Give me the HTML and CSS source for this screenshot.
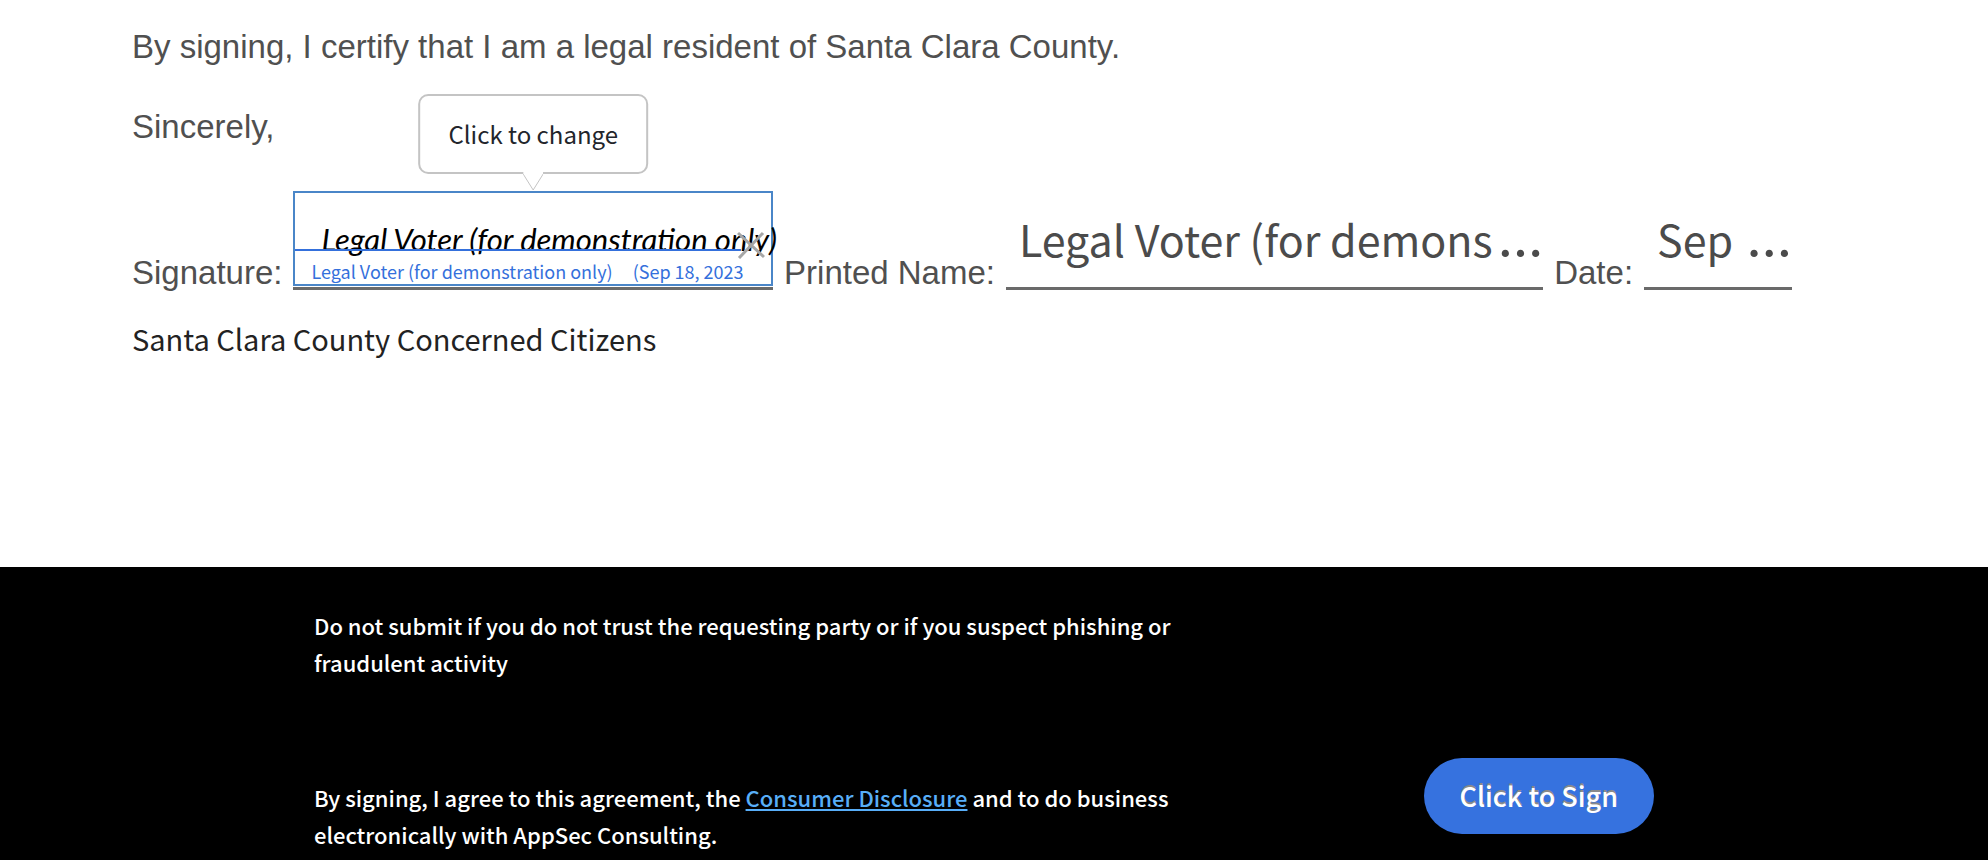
FILE: index.html
```html
<!DOCTYPE html>
<html lang="en">
<head>
<meta charset="utf-8">
<meta name="viewport" content="width=device-width, initial-scale=1">
<title>Sign agreement</title>
<link rel="stylesheet" href="styles.css">
</head>
<body>
<main class="document">
  <p class="line">By signing, I certify that I am a legal resident of Santa Clara County.</p>
  <p class="line">Sincerely,</p>
  <div class="sign-row">
    <label class="label" for="signature">Signature:</label>
    <div class="field field-signature">
      <div class="tooltip" role="tooltip" id="sig-tip">
        Click to change
        <svg class="arrow" viewBox="0 0 20 19" width="20" height="19" aria-hidden="true"><path d="M0 0 H20 V2 L10 18 L0 2 Z" fill="#fff"/><path d="M0 2 L10 18 L20 2" fill="none" stroke="#c4c4c4" stroke-width="1"/></svg>
      </div>
      <button class="signature" id="signature" type="button" aria-describedby="sig-tip">
        <span class="script">Legal Voter (for demonstration only)</span>
        <span class="stamp"><span>Legal Voter (for demonstration only)</span><span>(Sep 18, 2023</span></span>
      </button>
      <button class="clear" type="button" aria-label="Clear signature">
        <svg viewBox="0 0 28 28" width="28" height="28"><path d="M1 2 L27 26 M26 2 L2 27" fill="none" stroke="#a6a6a6" stroke-width="3"/></svg>
      </button>
    </div>
    <label class="label" for="printed">Printed Name:</label>
    <div class="field field-name">
      <input class="value" id="printed" type="text" value="Legal Voter (for demons" readonly>
      <span class="more">…</span>
    </div>
    <label class="label" for="date">Date:</label>
    <div class="field field-date">
      <input class="value" id="date" type="text" value="Sep" readonly>
      <span class="more">…</span>
    </div>
  </div>
  <p class="org">Santa Clara County Concerned Citizens</p>
</main>
<footer class="footer">
  <p class="notice">Do not submit if you do not trust the requesting party or if you suspect phishing or fraudulent activity</p>
  <div class="consent">
    <p class="notice">By signing, I agree to this agreement, the <a class="link" href="#">Consumer Disclosure</a> and to do business electronically with AppSec Consulting.</p>
    <button class="sign" type="button">Click to Sign</button>
  </div>
</footer>
</body>
</html>
```
FILE: styles.css
```css
* {
  box-sizing: border-box;
}

body {
  margin: 0;
  min-height: 100vh;
  display: flex;
  flex-direction: column;
  background: #fff;
  font-family: "Noto Sans CJK SC", "Noto Sans", sans-serif;
}

p {
  margin: 0;
}

button,
input {
  font: inherit;
  border: 0;
  background: none;
  padding: 0;
}

.document {
  flex: 1;
  padding: 27px 196px 0 132px;
}

.line,
.label {
  font-family: "Liberation Sans", Arial, sans-serif;
  font-size: 33px;
  line-height: 40px;
  color: #505050;
}

.line {
  margin-bottom: 40px;
}

.sign-row {
  display: flex;
  align-items: flex-end;
  gap: 11px;
  margin-top: 44px;
}

.label {
  line-height: 34px;
  white-space: nowrap;
}

.field {
  position: relative;
  display: flex;
  height: 99px;
  min-width: 0;
  border-bottom: 3px solid #6a6a6a;
}

.field-signature {
  flex: 483 1 0;
}

.field-name {
  flex: 541 1 0;
}

.field-date {
  flex: 149 1 0;
}

.signature {
  display: flex;
  flex-direction: column;
  width: 100%;
  height: 95px;
  border: 2px solid #4a86c8;
  text-align: left;
  white-space: nowrap;
}

.script {
  padding: 26px 0 0 26px;
  height: 56px;
  font-family: "Lato", sans-serif;
  font-style: italic;
  font-size: 31px;
  line-height: 40px;
  color: #000;
}

.stamp {
  position: relative;
  display: flex;
  gap: 20px;
  width: 446px;
  padding-left: 16px;
  border-top: 2px solid #3470dc;
  font-size: 18px;
  line-height: 40px;
  color: #3470dc;
}

.clear {
  position: absolute;
  right: 8px;
  top: 40px;
  width: 28px;
  height: 28px;
}

.clear svg {
  display: block;
}

.tooltip {
  position: absolute;
  left: 50%;
  bottom: 113px;
  transform: translateX(-50%);
  padding: 20px 28px;
  border: 2px solid #c4c4c4;
  border-radius: 10px;
  background: #fff;
  font-size: 24px;
  line-height: 36px;
  white-space: nowrap;
  color: #22252b;
}

.arrow {
  position: absolute;
  left: 50%;
  top: 100%;
  margin-left: -10px;
}

.value {
  flex: 1;
  min-width: 0;
  width: 100%;
  height: 94px;
  padding-left: 13px;
  font-size: 43px;
  color: #4b4b4b;
}

.more {
  font-family: "Inter", sans-serif;
  font-size: 50px;
  font-weight: 500;
  line-height: 96px;
  color: #4b4b4b;
}

.org {
  margin-top: 26px;
  font-size: 29px;
  line-height: 44px;
  color: #222;
}

.footer {
  padding: 40px 334px 7px 314px;
  background: #000;
  color: #fff;
}

.notice {
  max-width: 880px;
  font-size: 22px;
  font-weight: 500;
  line-height: 37px;
}

.consent {
  display: flex;
  align-items: flex-start;
  justify-content: space-between;
  margin-top: 77px;
}

.consent .notice {
  padding-top: 21px;
}

.link {
  color: #58aef8;
}

.sign {
  padding: 0 36px;
  border-radius: 38px;
  background: #3672df;
  color: #fff;
  font-size: 27px;
  font-weight: 500;
  line-height: 76px;
  text-shadow: 0 -2px 0 #8a8a8a;
  white-space: nowrap;
}
```
